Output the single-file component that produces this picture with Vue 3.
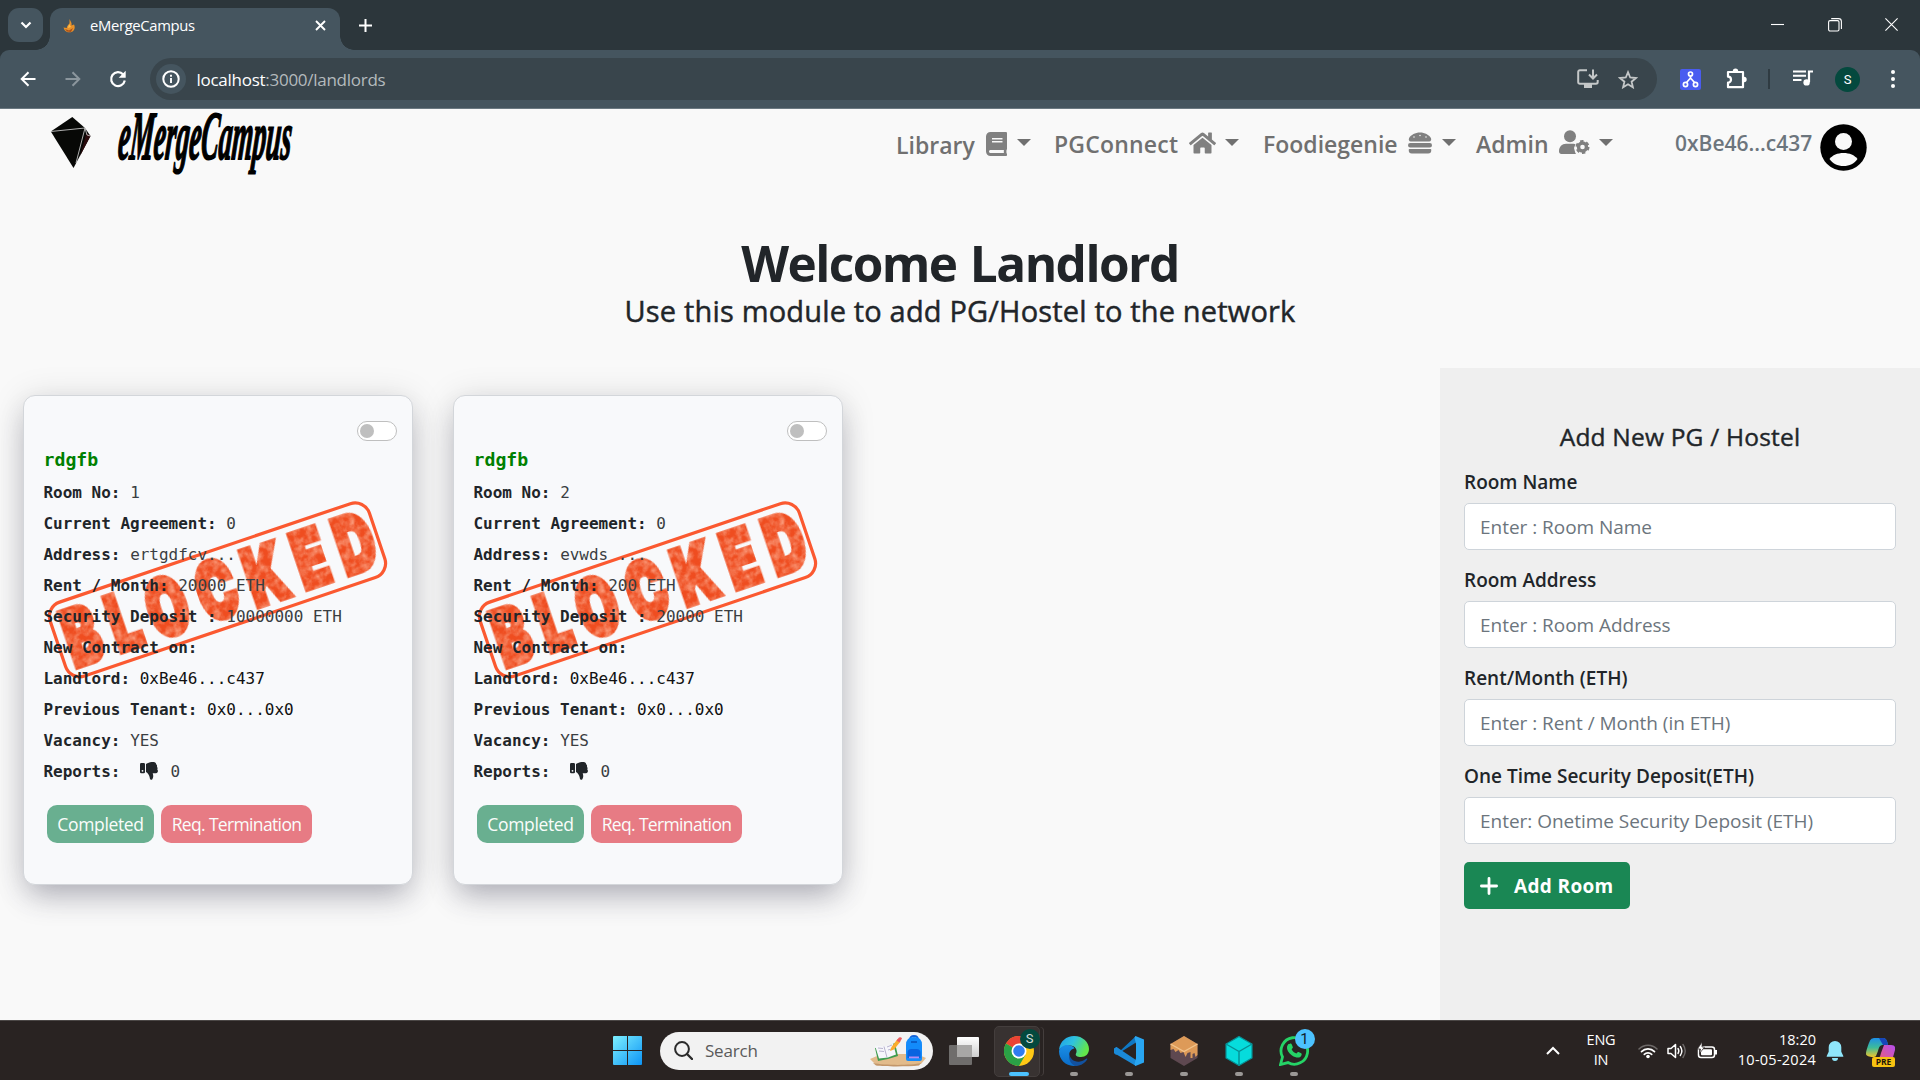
<script setup>
const navItems = [
  { label: 'Library', icon: 'book', cls: 'library' },
  { label: 'PGConnect', icon: 'house', cls: 'pg' },
  { label: 'Foodiegenie', icon: 'burger', cls: 'foodie' },
  { label: 'Admin', icon: 'admin', cls: 'admin' },
]

const rooms = [
  { no: '1', address: 'ertgdfcv...', rent: '20000 ETH', deposit: '10000000 ETH' },
  { no: '2', address: 'evwds ...', rent: '200 ETH', deposit: '20000 ETH' },
]

const rowsOf = (r) => [
  { k: 'Room No:', v: r.no },
  { k: 'Current Agreement:', v: '0' },
  { k: 'Address:', v: r.address },
  { k: 'Rent / Month:', v: r.rent },
  { k: 'Security Deposit :', v: r.deposit },
  { k: 'New Contract on:', v: '' },
  { k: 'Landlord:', v: '0xBe46...c437', dark: true },
  { k: 'Previous Tenant:', v: '0x0...0x0', dark: true },
  { k: 'Vacancy:', v: 'YES' },
]

const fields = [
  { label: 'Room Name', ph: 'Enter : Room Name' },
  { label: 'Room Address', ph: 'Enter : Room Address' },
  { label: 'Rent/Month (ETH)', ph: 'Enter : Rent / Month (in ETH)' },
  { label: 'One Time Security Deposit(ETH)', ph: 'Enter: Onetime Security Deposit (ETH)' },
]
</script>

<template>
  <div class="screen">
    <div class="tabstrip">
      <div class="tabsearch">
        <svg width="12" height="8" viewBox="0 0 12 8"><path d="M1.500 1.500 6 6l4.500-4.500" fill="none" stroke="#fff" stroke-width="2.200" /></svg>
      </div>
      <div class="tab">
        <svg class="favicon" width="14" height="16" viewBox="0 0 14 16">
          <path d="M6.500 1C8 4 9 5 8.500 7.500L11 6.500c1.500 3 .5 5.500-1.500 7-3 1.500-6 1-8-1.500L.5 9.500 4 10c-.5-2 2-3 2.500-5z" fill="#e8912a" />
          <path d="M2 11l4 1.500 4-2.500-2 4-4-.5z" fill="#a8501c" />
          <path d="M6 6l2 3-3 1z" fill="#ffc04a" />
        </svg>
        <span class="tabtitle">eMergeCampus</span>
        <svg class="tabclose" width="11" height="11" viewBox="0 0 11 11"><path d="M1 1l9 9M10 1l-9 9" stroke="#fff" stroke-width="1.900" /></svg>
      </div>
      <svg class="newtab" width="13" height="13" viewBox="0 0 13 13"><path d="M6.500 0v13M0 6.500h13" stroke="#fff" stroke-width="2" /></svg>
      <div class="wincontrols">
        <svg width="13" height="13" viewBox="0 0 13 13"><path d="M0 6.500h13" stroke="#fff" stroke-width="1.100" /></svg>
        <svg width="14" height="14" viewBox="0 0 14 14" fill="none" stroke="#fff" stroke-width="1.100"><rect x=".6" y="2.600" width="10.400" height="10.400" rx="1.500" /><path d="M3.200.6h7.300a2.900 2.900 0 0 1 2.900 2.900v7.500" /></svg>
        <svg width="13" height="13" viewBox="0 0 13 13"><path d="M.4.4l12.200 12.200M12.600.4.4 12.600" stroke="#fff" stroke-width="1.100" /></svg>
      </div>
    </div>

    <div class="toolbarwrap">
      <div class="toolbar">
        <svg class="back" width="16" height="16" viewBox="0 0 16 16" fill="none" stroke="#fff" stroke-width="2"><path d="M15.500 8H2M8.500 1.200 1.700 8l6.800 6.800" /></svg>
        <svg class="fwd" width="16" height="16" viewBox="0 0 16 16" fill="none" stroke="#8b969d" stroke-width="2"><path d="M.5 8H14M7.500 1.200 14.300 8l-6.800 6.800" /></svg>
        <svg class="reload" width="18" height="18" viewBox="0 0 18 18"><path d="M14.200 4.500A6.900 6.900 0 1 0 15.800 10.500" fill="none" stroke="#fff" stroke-width="2.200" /><path d="M16.700.8v7H9.700z" fill="#fff" /></svg>
        <div class="omnibox">
          <span class="siteinfo">
            <svg width="18" height="18" viewBox="0 0 18 18"><circle cx="9" cy="9" r="7.700" fill="none" stroke="#fff" stroke-width="2" /><path d="M9 8v5M9 4.800v2" stroke="#fff" stroke-width="1.900" /></svg>
          </span>
          <span class="url">localhost<span class="path">:3000/landlords</span></span>
          <svg class="install" width="22" height="20" viewBox="0 0 22 20"><path d="M10 1.200H3A1.700 1.700 0 0 0 1.200 3v10A1.700 1.700 0 0 0 3 14.800h16a1.700 1.700 0 0 0 1.700-1.700V11" fill="none" stroke="#c4c7c8" stroke-width="2" /><path d="M7 15h8v4H7z" fill="#c4c7c8" /><path d="M16 .5V9M12 5.500l4 4 4-4" fill="none" stroke="#c4c7c8" stroke-width="2" /></svg>
          <svg class="star" width="20" height="19" viewBox="0 0 20 19"><path d="M10 2.200l2.200 5.300 5.700.5-4.300 3.700 1.300 5.600L10 14.300l-4.900 3 1.300-5.600L2.100 8l5.700-.5z" fill="none" stroke="#c4c7c8" stroke-width="1.800" /></svg>
        </div>
        <svg class="ext" width="21" height="21" viewBox="0 0 21 21"><rect width="21" height="21" rx="2" fill="#4a5cf0" /><g fill="none" stroke="#fff" stroke-width="1.700"><circle cx="10.500" cy="5" r="2" /><circle cx="5.500" cy="15.500" r="2.100" /><circle cx="15.500" cy="15.500" r="2.100" /><path d="M10.500 7v3.500M10.500 9 6.500 13.500M10.500 9l4 4.500" /></g></svg>
        <svg class="puzzle" width="21" height="21" viewBox="0 0 21 21"><path d="M2 4h15v15.200H2v-4.500a2.900 2.900 0 0 0 0-6z" fill="none" stroke="#fff" stroke-width="2.200" stroke-linejoin="round" /><path d="M6.800 3.200a2.700 2.700 0 0 1 5.400 0zM18 8.800a2.700 2.700 0 0 1 0 5.400z" fill="#fff" /></svg>
        <span class="sep"></span>
        <svg class="queue" width="20" height="16" viewBox="0 0 20 16"><path d="M0 1.500h13M0 5.700h13M0 10h8.500" stroke="#fff" stroke-width="2" /><path d="M16 12V1.500h4" fill="none" stroke="#fff" stroke-width="2.200" /><circle cx="13.600" cy="12.400" r="3.200" fill="#fff" /></svg>
        <span class="profile">S</span>
        <svg class="kebab" width="4" height="18" viewBox="0 0 4 18" fill="#fff"><circle cx="2" cy="2" r="2" /><circle cx="2" cy="9" r="2" /><circle cx="2" cy="16" r="2" /></svg>
      </div>
    </div>

    <main class="page">
      <header class="nav">
        <svg class="gem" width="42" height="54" viewBox="0 0 42 54">
          <path d="M22.300 1 .8 15.500 23.500 52 40.500 20 35 12z" fill="#070806" />
          <path d="M30 40 36.500 17 40.500 20z" fill="#2a0a0c" />
          <path d="M.8 15.500 35 12 26 47M35 12l2 7 3.500 1" fill="none" stroke="#d8d8d8" stroke-width=".8" />
        </svg>
        <svg class="wordmark" width="180" height="66" viewBox="0 0 180 66">
          <text transform="translate(-1 44.500) skewX(-5)" font-size="69" textLength="173" lengthAdjust="spacingAndGlyphs">eMergeCampus</text>
        </svg>
        <nav class="menu">
          <a v-for="n in navItems" :key="n.label" :class="['item', n.cls]">
            <span class="label">{{ n.label }}</span>
            <svg v-if="n.icon === 'book'" class="ico" width="21" height="24" viewBox="0 0 448 512"><path fill="#808080" d="M448 360V24c0-13.300-10.700-24-24-24H96C43 0 0 43 0 96v320c0 53 43 96 96 96h328c13.300 0 24-10.700 24-24v-16c0-7.500-3.500-14.300-8.900-18.700-4.200-15.400-4.200-59.300 0-74.700 5.400-4.300 8.900-11.100 8.900-18.600zM128 134c0-3.300 2.700-6 6-6h212c3.300 0 6 2.700 6 6v20c0 3.300-2.700 6-6 6H134c-3.300 0-6-2.700-6-6v-20zm0 64c0-3.300 2.700-6 6-6h212c3.300 0 6 2.700 6 6v20c0 3.300-2.700 6-6 6H134c-3.300 0-6-2.700-6-6v-20zm253.400 250H96c-17.700 0-32-14.300-32-32 0-17.600 14.400-32 32-32h285.400c-1.900 17.100-1.900 46.900 0 64z" /></svg>
            <svg v-if="n.icon === 'house'" class="ico" width="27" height="24" viewBox="0 0 576 512"><path fill="#808080" d="M280.370 148.260L96 300.110V464a16 16 0 0 0 16 16l112.060-.29a16 16 0 0 0 15.920-16V368a16 16 0 0 1 16-16h64a16 16 0 0 1 16 16v95.640a16 16 0 0 0 16 16.050L464 480a16 16 0 0 0 16-16V300L295.670 148.260a12.190 12.190 0 0 0-15.300 0zM571.600 251.470L488 182.560V44.050a12 12 0 0 0-12-12h-56a12 12 0 0 0-12 12v72.610L318.470 43a48 48 0 0 0-61 0L4.340 251.470a12 12 0 0 0-1.600 16.900l25.500 31A12 12 0 0 0 45.150 301l235.220-193.740a12.190 12.190 0 0 1 15.300 0L530.900 301a12 12 0 0 0 16.900-1.600l25.500-31a12 12 0 0 0-1.700-16.930z" /></svg>
            <svg v-if="n.icon === 'burger'" class="ico" width="24" height="24" viewBox="0 0 512 512"><path fill="#808080" d="M464 256H48a48 48 0 0 0 0 96h416a48 48 0 0 0 0-96zm16 128H32a16 16 0 0 0-16 16v16a64 64 0 0 0 64 64h352a64 64 0 0 0 64-64v-16a16 16 0 0 0-16-16zM58.640 224h394.720c34.570 0 54.620-43.900 34.820-75.880C448 83.200 359.550 32.100 256 32c-103.540.1-192 51.200-232.180 116.110C4 180.090 24.070 224 58.640 224zM384 112a16 16 0 1 1-16 16 16 16 0 0 1 16-16zM256 80a16 16 0 1 1-16 16 16 16 0 0 1 16-16zm-128 32a16 16 0 1 1-16 16 16 16 0 0 1 16-16z" /></svg>
            <svg v-if="n.icon === 'admin'" class="ico" width="31" height="25" viewBox="0 0 31 25" fill="#808080"><circle cx="11" cy="6.200" r="6" /><path d="M0 21.500c0-5 3-7.800 7-7.800h7.500c1 0 1.500.2 2 .5l-1.500 3.800 1.200 4.500.8 1.500H2.400C1 24 0 23 0 21.500z" /><circle cx="23.500" cy="17" r="4" fill="none" stroke="#808080" stroke-width="3.400" /><circle cx="23.500" cy="17" r="6" fill="none" stroke="#808080" stroke-width="2" stroke-dasharray="3.400 2.883" /></svg>
            <span class="caret"></span>
          </a>
        </nav>
        <span class="wallet">0xBe46...c437</span>
        <svg class="avatar" width="47" height="47" viewBox="0 0 47 47"><circle cx="23.500" cy="23.500" r="23.200" /><circle cx="23.500" cy="17.500" r="8.500" fill="#f9f9f9" /><path d="M9.500 35c3-4 8-6 14-6s11 2 14 6c-3 4.500-8 7-14 7s-11-2.500-14-7z" fill="#f9f9f9" /></svg>
      </header>

      <section class="hero">
        <h1>Welcome Landlord</h1>
        <p>Use this module to add PG/Hostel to the network</p>
      </section>

      <div class="content">
        <div class="cards">
          <article v-for="r in rooms" :key="r.no" class="card">
            <svg class="stamp" width="350" height="186" viewBox="0 0 350 186">
              <defs>
                <filter :id="'grain' + r.no" x="-5%" y="-5%" width="110%" height="110%" color-interpolation-filters="sRGB">
                  <feTurbulence type="fractalNoise" baseFrequency=".14" numOctaves="4" seed="4" result="n" />
                  <feColorMatrix in="n" type="matrix" values="0 0 0 0 1  0 0 0 0 .75  0 0 0 0 .65  1.400 0 0 0 -.500" result="l" />
                  <feComposite in="l" in2="SourceAlpha" operator="in" result="g" />
                  <feMerge><feMergeNode in="SourceGraphic" /><feMergeNode in="g" /></feMerge>
                </filter>
              </defs>
              <g transform="rotate(-18.700 175 93)">
                <rect x="7" y="54" width="337" height="78" rx="15" fill="none" stroke="#fb5930" stroke-width="3.200" />
                <g :filter="`url(#grain${r.no})`">
                  <text transform="translate(15 121.500) scale(.66 1)" font-size="79" textLength="492" lengthAdjust="spacing">BLOCKED</text>
                </g>
              </g>
            </svg>
            <div class="cardbody">
              <div class="switchrow"><span class="switch"><i></i></span></div>
              <h2 class="roomname">rdgfb</h2>
              <div v-for="row in rowsOf(r)" :key="row.k" class="row">
                <b>{{ row.k }}</b>&nbsp;<span :class="{ dark: row.dark }">{{ row.v }}</span>
              </div>
              <div class="row reports">
                <b>Reports:</b>
                <svg width="18" height="18" viewBox="0 0 18 18"><path d="M0 2.200Q0 1 1.200 1h2.600Q5 1 5 2.200V10q0 1.200-1.200 1.200H1.200Q0 11.200 0 10z" fill="#212529" /><circle cx="2.500" cy="8.800" r=".9" fill="#f9fafc" /><path d="M6 2C8 1.200 9.500.2 11.500.1c3-.2 4.500.3 4.700 2.200 1 .7 1 1.700.7 2.500.8.8.8 1.800.4 2.600 1.300 1.600.4 3.800-1.300 3.800h-3.300c.3 1.300.8 2.300.4 4-.3 1.600-1 2.600-2 2.600-1.200 0-1.200-1.500-1.500-2.800C9.200 13 7.500 10.500 6 10z" fill="#212529" /></svg>
                <span>0</span>
              </div>
              <div class="actions">
                <button class="ok">Completed</button>
                <button class="term">Req. Termination</button>
              </div>
            </div>
          </article>
        </div>

        <aside class="panel">
          <h3>Add New PG / Hostel</h3>
          <div v-for="f in fields" :key="f.label" class="field">
            <label>{{ f.label }}</label>
            <div class="input">{{ f.ph }}</div>
          </div>
          <button class="add">
            <svg width="18" height="18" viewBox="0 0 18 18"><path d="M9 1.400v15.200M1.400 9h15.200" stroke="#fff" stroke-width="2.800" stroke-linecap="round" /></svg>
            <span>Add Room</span>
          </button>
        </aside>
      </div>
    </main>

    <footer class="taskbar">
      <svg class="start" width="29" height="29" viewBox="0 0 29 29">
        <defs><linearGradient id="win" x1="0" y1="0" x2="1" y2="1"><stop offset="0" stop-color="#7df0ff" /><stop offset="1" stop-color="#0d94f5" /></linearGradient></defs>
        <path d="M1 0h13v14H0V1a1 1 0 0 1 1-1zM15 0h13a1 1 0 0 1 1 1v13H15zM0 15h14v14H1a1 1 0 0 1-1-1zM15 15h14v13a1 1 0 0 1-1 1H15z" fill="url(#win)" />
      </svg>
      <div class="search">
        <svg class="lens" width="19" height="19" viewBox="0 0 19 19"><circle cx="8" cy="8" r="6.900" fill="none" stroke="#2b2b2b" stroke-width="2" /><path d="M13 13l5 5" stroke="#2b2b2b" stroke-width="2.400" stroke-linecap="round" /></svg>
        <span class="q">Search</span>
        <svg class="art" width="58" height="32" viewBox="0 0 58 32">
          <path d="M1 24c8-4 14-5 28-5s20 0 28 4l-5 6c-10 2-36 2-46 0z" fill="#e2bb8b" />
          <path d="M4 28c12 2.500 38 2.500 48 0l-2 2.500c-12 1.200-34 1.200-43 0z" fill="#c2966a" />
          <path d="M6 13l10-1 10-4 3 13-10 3-10 2z" fill="#3f9c4e" />
          <path d="M6 10.500l9 1 9-3 3 11-8 3-9 1z" fill="#f6f6fb" />
          <path d="M15 11.500l3 11M9 13l5 .5M10 16l5 .5M18 12l5-2M19 15l5-1.500" stroke="#b9b4cf" fill="none" stroke-width="1" />
          <path d="M21 16l1.500-4 6-8 3 2.500-6.500 8z" fill="#fbab2c" /><path d="M27.500 5.500 30 2.500q2-1 3 1l-2.500 4z" fill="#ea5a5f" />
          <path d="M41 5q0-4 4-4t4 4" fill="none" stroke="#1562d8" stroke-width="1.800" />
          <path d="M37 10q0-8 8-8t8 8v14q0 2-2 2H39q-2 0-2-2z" fill="#138bfb" />
          <path d="M38.500 18q0-4 4-4h5q4 0 4 4v5h-13z" fill="#0a63e0" /><path d="M40 21.500h10v1.800H40z" fill="#b28bf4" /><path d="M42 7h6" stroke="#0a4fb8" stroke-width="1.500" />
        </svg>
      </div>
      <svg class="taskview" width="31" height="28" viewBox="0 0 31 28"><defs><linearGradient id="tv" x1="0" y1="0" x2="0" y2="1"><stop offset="0" stop-color="#fff" /><stop offset="1" stop-color="#cfcfcf" /></linearGradient></defs><rect x="0" y="8" width="23" height="20" rx="1" fill="#6f6d6c" /><rect x="8" y="0" width="22" height="20" rx="1" fill="url(#tv)" /><path d="M8 8h15v12H8z" fill="#a8a7a6" /></svg>
      <div class="app chrome active">
        <svg width="30" height="30" viewBox="0 0 30 30"><circle cx="15" cy="15" r="15" fill="#ffc815" /><path d="M15 15 2 7.500A15 15 0 0 1 28 7.500H15z" fill="#ea4335" /><path d="M15 15 2 7.500A15 15 0 0 0 15 30l6.500-11.300z" fill="#2aa146" /><circle cx="15" cy="15" r="7.500" fill="#fff" /><circle cx="15" cy="15" r="5.800" fill="#2f7cf0" /></svg>
        <span class="badge s">S</span>
      </div>
      <div class="app">
        <svg width="30" height="30" viewBox="0 0 30 30"><defs><linearGradient id="e1" x1="0" y1="0" x2="1" y2=".4"><stop offset="0" stop-color="#1e9ee8" /><stop offset=".5" stop-color="#2fc2df" /><stop offset="1" stop-color="#62e64b" /></linearGradient><linearGradient id="e2" x1="0" y1="0" x2="0" y2="1"><stop offset="0" stop-color="#1a8fe6" /><stop offset="1" stop-color="#0a6cc8" /></linearGradient></defs><path d="M0 14C1 5 7.500 0 15 0c9 0 15 6.500 15 13 0 5-3.500 8-8 8-4 0-6-1.500-5-3.500 2-3.500-1-8-6-8C5.500 9.500 1.500 12 0 14z" fill="url(#e1)" /><path d="M0 15c1-4 5-6.500 9-6 3.500.3 6 2 6.500 3.500C11 13 9 18 11 22.500c1.500 4 6 6.500 9.500 6C11 33 0 26 0 15z" fill="url(#e2)" /><path d="M10.300 18c.7 5 5 8.500 10.700 7.500 3-.5 5-2 6.500-3 .8-.3 1 .3.700 1C26.500 26.500 22 30 17 29.900 11 28.500 9.300 22.500 10.300 18z" fill="#12519f" /></svg>
        <i></i>
      </div>
      <div class="app">
        <svg width="30" height="30" viewBox="0 0 30 30"><path d="M22 0 6.500 14.500 2.500 11 0 12.500v4.500l2 2L22 6.500z" fill="#0f78c4" /><path d="M0 12.800 2.500 11 22 24v6L0 17z" fill="#1b8ad8" /><path d="M21.500 0 30 3.500v23L21.500 30l-1-1.500L22 22V8l-1.500-6.500z" fill="#29a6f2" /></svg>
        <i></i>
      </div>
      <div class="app">
        <svg width="28" height="30" viewBox="0 0 28 30"><path d="M14 0 27.500 8v14L14 30 .5 22V8z" fill="#5e4850" /><path d="M14 0 27.500 8v11l-2 2-1-4-2 1v4h-2v-6l-3 1-2 4-2-5-3 1-2-3-3 2-2-3-3 1V8z" fill="#dd9a58" /><path d="M.5 8 14 15.500 27.500 8" fill="none" stroke="#f2c48c" stroke-width="1.300" /></svg>
        <i></i>
      </div>
      <div class="app">
        <svg width="28" height="30" viewBox="0 0 28 30"><path d="M14 .5 27 8v14L14 29.500 1 22V8z" fill="#06dcdc" stroke="#078f94" stroke-width="1.200" /><path d="M1 8l13 7.500L27 8M14 15.500v14" fill="none" stroke="#078f94" stroke-width="1.400" /></svg>
        <i></i>
      </div>
      <div class="app">
        <svg width="30" height="30" viewBox="0 0 30 30"><path d="M1.500 28.500l2-7.500A13.300 13.300 0 1 1 9 26.600z" fill="none" stroke="#25d366" stroke-width="2.800" /><path d="M10.500 8c1-.8 2-.3 2.400.7l.9 2.200c.2.600-.2 1.200-1.200 2.300 1.200 2.200 2.500 3.400 4.800 4.300 1-1.300 1.500-1.800 2.200-1.500l2.600 1.300c1 .6.500 2.500-1 3.600-2 1.400-5 .6-8.200-1.500-3.500-2.600-5.500-5.800-5-8.500.2-1.300 1-2.200 1.500-2.900z" fill="#25d366" /></svg>
        <span class="badge one">1</span>
        <i></i>
      </div>
      <div class="tray">
        <svg class="up" width="14" height="9" viewBox="0 0 14 9"><path d="M1 8l6-6 6 6" fill="none" stroke="#fff" stroke-width="2" /></svg>
        <div class="lang"><span>ENG</span><span>IN</span></div>
        <svg class="wifi" width="20" height="16" viewBox="0 0 20 16" fill="none" stroke-linecap="round"><path d="M1 6a12.500 12.500 0 0 1 18 0" stroke="#6d6968" stroke-width="1.500" /><path d="M3.500 8.700a9 9 0 0 1 13 0M6.300 11.300a5.300 5.300 0 0 1 7.400 0" stroke="#fff" stroke-width="1.700" /><circle cx="10" cy="13.500" r="1.800" fill="#fff" /></svg>
        <svg class="vol" width="20" height="16" viewBox="0 0 20 16" fill="none" stroke-linecap="round" stroke-linejoin="round"><path d="M1 5.500h3L8.500 1.500v13L4 10.500H1z" stroke="#fff" stroke-width="1.500" /><path d="M11 5.500q1.700 2.500 0 5M13.300 3.500q3.200 4.500 0 9" stroke="#fff" stroke-width="1.400" /><path d="M16 1.500q4.500 6.500 0 13" stroke="#6d6968" stroke-width="1.400" /></svg>
        <svg class="batt" width="21" height="17" viewBox="0 0 21 17"><rect x="1.500" y="5" width="16" height="10.500" rx="2.500" fill="none" stroke="#fff" stroke-width="1.500" /><rect x="4" y="7.300" width="11" height="6" rx="1" fill="#fff" /><path d="M19 8v4.500" stroke="#fff" stroke-width="2" /><path d="M5 0 .5 7h3l-1 4.500L7.500 5H5z" fill="#fff" stroke="#292322" stroke-width=".7" /></svg>
        <div class="clock"><span>18:20</span><span class="date">10-05-2024</span></div>
        <svg class="bell" width="18" height="20" viewBox="0 0 18 20" fill="#8fe6fb"><path d="M9 0a6.300 6.300 0 0 1 6.300 6.300v4.500L17.300 15v.8H.7V15l2-4.200V6.300A6.300 6.300 0 0 1 9 0zM6 17h6a3 3 0 0 1-6 0z" /></svg>
        <div class="copilot">
          <svg width="29" height="26" viewBox="0 0 29 26"><defs><linearGradient id="c1" x1="0" y1="0" x2="0" y2="1"><stop offset="0" stop-color="#1d8fe8" /><stop offset=".5" stop-color="#3dbb9a" /><stop offset="1" stop-color="#f0c52a" /></linearGradient><linearGradient id="c2" x1="1" y1="0" x2="0" y2="1"><stop offset="0" stop-color="#b44df0" /><stop offset="1" stop-color="#f2635f" /></linearGradient></defs><path d="M8 0h9c3 0 4 2 5 7h-5c-3 0-4 2-5 6l-2 5c-1 2-10 1-10-2C0 12 3 5 4 2.500Q5 0 8 0z" fill="url(#c1)" /><path d="M18 7h7q5 0 4 5l-2.500 9Q25 26 20 26h-8c-2 0-2-3-1-5 2 0 3-2 4-6z" fill="url(#c2)" /><path d="M13 0h4c3 0 4 2 5 7h-5z" fill="#1746b8" /></svg>
          <span class="pre">PRE</span>
        </div>
      </div>
    </footer>
  </div>
</template>

<style>
body { overflow: hidden; }
</style>

<style scoped>
.screen { width: 1920px; height: 1080px; display: flex; flex-direction: column; background: #f9f9f9; font-family: "Open Sans", "Noto Sans", sans-serif; color: #212529; overflow: hidden; white-space: nowrap; }
.screen svg { flex: none; display: block; }
h1, h2, h3, p { margin: 0; }
button { border: 0; padding: 0; font: inherit; }

/* browser chrome */
.tabstrip { height: 50px; flex: none; display: flex; background: #2c363b; }
.tabsearch { width: 35px; height: 34px; margin: 8px 0 0 8px; border-radius: 11px; background: #45555f; display: flex; align-items: center; justify-content: center; }
.tab { position: relative; width: 290px; height: 42px; margin: 8px 0 0 7px; border-radius: 12px 12px 0 0; background: #45555f; display: flex; }
.tab::before, .tab::after { content: ""; position: absolute; bottom: 0; width: 14px; height: 14px; }
.tab::before { left: -14px; background: radial-gradient(circle at 0 0, transparent 13.5px, #45555f 14px); }
.tab::after { right: -14px; background: radial-gradient(circle at 100% 0, transparent 13.5px, #45555f 14px); }
.favicon { margin: 10px 0 0 13px; }
.tabtitle { width: 104px; margin-left: 13px; font-size: 14.800px; letter-spacing: -.33px; line-height: 35px; color: #fff; }
.tabclose { margin: 12px 0 0 121px; }
.newtab { margin: 19px 0 0 19px; }
.wincontrols { margin: 18px 22px 0 auto; display: flex; gap: 43.500px; }
.toolbarwrap { flex: none; background: #2c363b; }
.toolbar { height: 58px; border-bottom: 1px solid #6a7881; border-radius: 9px 9px 0 0; background: #45555f; display: flex; align-items: center; }
.back { margin-left: 20px; }
.fwd { margin-left: 29px; }
.reload { margin-left: 28px; }
.omnibox { width: 1507px; height: 42px; margin-left: 23px; border-radius: 21px; background: #39454c; display: flex; align-items: center; }
.siteinfo { width: 30px; height: 30px; margin-left: 6px; border-radius: 50%; background: #45555f; display: flex; align-items: center; justify-content: center; }
.url { width: 189px; margin-left: 10.500px; font-size: 17px; letter-spacing: -.27px; color: #fff; }
.path { color: #b4babd; }
.install { margin-left: auto; }
.star { margin: 0 19px 0 19px; }
.ext { margin-left: 23px; }
.puzzle { margin-left: 25px; margin-top: -2px; }
.sep { width: 2px; height: 20px; margin-left: 21px; background: #2f3b42; }
.queue { margin-left: 23px; margin-top: -2px; }
.profile { width: 25px; height: 25px; margin-left: 22px; border-radius: 50%; background: #04493e; color: #fff; font: 13px/25px Roboto, sans-serif; text-align: center; }
.kebab { margin-left: 31px; }

/* page */
.page { height: 911px; flex: none; display: flex; flex-direction: column; }
.nav { height: 81px; flex: none; display: flex; }
.gem { margin: 7px 0 0 50px; }
.wordmark { margin: 5px 0 0 26px; overflow: visible; }
.wordmark text { font-family: "Liberation Serif", serif; font-weight: 700; font-style: italic; stroke: #000; stroke-width: 1.800; }
.menu { display: flex; margin-left: 598px; height: 70px; }
.item { display: flex; align-items: center; height: 70px; color: #707070; font-size: 23px; font-weight: 600; }
.item .label { padding-bottom: 1px; }
.item .caret { border: 7px solid transparent; border-top-color: #707070; border-bottom: 0; margin-left: 9px; margin-top: -3px; }
.ico { margin-left: 10px; margin-top: -3px; }
.item.library .label { width: 80px; padding: 2px 0 0; }
.item.library .ico { margin-top: -1px; }
.item.library .caret { margin-left: 10px; }
.item.pg { margin-left: 23px; }
.item.pg .label { width: 125px; letter-spacing: .2px; }
.item.foodie { margin-left: 24px; }
.item.foodie .label { width: 135px; }
.item.foodie .caret { margin-left: 10px; }
.item.admin { margin-left: 20px; }
.item.admin .label { width: 73px; }
.wallet { width: 137px; margin-left: 62px; font-size: 21px; font-weight: 600; line-height: 69px; color: #6c757d; }
.avatar { margin: 15px 0 0 8px; }
.hero { height: 178px; flex: none; text-align: center; }
.hero h1 { padding-top: 42px; font-size: 49.500px; letter-spacing: -1.550px; word-spacing: 2px; line-height: 62px; font-weight: 700; }
.hero p { font-size: 29px; line-height: 36px; margin-top: -1px; letter-spacing: .17px; -webkit-text-stroke: .45px #212529; }
.content { flex: 1; display: flex; justify-content: space-between; }
.cards { display: flex; gap: 40px; padding: 27px 0 0 23px; }
.card { position: relative; width: 390px; height: 490px; box-sizing: border-box; border: 1px solid #d3d6da; border-radius: 12px; background: #f8f9fb; box-shadow: 0 16px 30px -6px rgba(50,50,80,.3), 0 3px 34px rgba(0,0,0,.13); }
.stamp { position: absolute; left: 18px; top: 101px; overflow: visible; }
.stamp text { font-family: Inter, sans-serif; font-weight: 900; fill: #ef4d20; stroke: #ef4d20; stroke-width: 5.500; }
.cardbody { position: relative; padding: 25px 15px 0 19.500px; font-family: "DejaVu Sans Mono", monospace; font-size: 15.990px; }
.switchrow { display: flex; justify-content: flex-end; }
.switch { width: 38px; height: 18px; border: 1px solid #bfbfbf; border-radius: 10px; background: #fff; display: flex; align-items: center; }
.switch i { width: 14px; height: 14px; margin-left: 2px; border-radius: 50%; background: #bfbfbf; }
.roomname { margin-top: 3px; font-size: 18.200px; line-height: 32px; font-weight: 700; color: #008000; }
.row { height: 31px; line-height: 31px; }
.row span { color: #3a3e42; }
.row span.dark { color: #111; }
.row:nth-of-type(2) { margin-top: 1px; }
.reports { display: flex; align-items: center; }
.reports svg { margin-left: 19px; margin-top: -2px; }
.reports span { margin-left: 13px; }
.actions { display: flex; gap: 7px; margin: 18px 0 0 3.500px; font-family: "Open Sans", sans-serif; font-size: 17.500px; }
.actions button { height: 38px; border-radius: 10px; color: #fafdfb; text-align: center; line-height: 38px; }
.ok { width: 107px; background: #69af90; letter-spacing: -.35px; }
.term { width: 151px; background: #e77b84; letter-spacing: -.65px; }
.panel { width: 480px; box-sizing: border-box; padding: 48px 24px 0; background: #efefef; }
.panel h3 { text-align: center; font-size: 24.500px; line-height: 42px; height: 40px; font-weight: 400; letter-spacing: .2px; -webkit-text-stroke: .4px #212529; }
.field { height: 98px; }
.field label { display: block; height: 47px; font-size: 19px; line-height: 52px; font-weight: 600; }
.input { height: 47px; box-sizing: border-box; border: 1px solid #ced4da; border-radius: 5px; background: #fff; padding-left: 15px; font-size: 19px; line-height: 47px; color: #6c757d; letter-spacing: -.03px; }
.add { width: 166px; height: 47px; margin-top: 14px; border-radius: 5px; background: #1a8754; color: #fff; font-size: 19px; font-weight: 700; letter-spacing: .35px; display: flex; align-items: center; }
.add svg { margin: 0 16px; }

/* taskbar */
.taskbar { height: 60px; flex: none; box-sizing: border-box; border-top: 1px solid #4b4746; background: #292322; display: flex; align-items: center; color: #fff; }
.start { margin-left: 613px; }
.search { width: 273px; height: 38px; margin-left: 18px; border-radius: 19px; background: #f2f2f2; display: flex; align-items: center; }
.lens { margin-left: 14px; }
.q { width: 52px; margin-left: 12px; font-size: 17px; letter-spacing: -.2px; color: #5a5a5a; }
.art { margin-left: auto; margin-right: 6px; }
.taskview { margin: 0 11.500px 0 16px; }
.app { position: relative; width: 55px; height: 50px; display: flex; align-items: center; justify-content: center; }
.app i { position: absolute; left: 23px; bottom: 0; width: 8px; height: 4px; border-radius: 2px; background: #9b9896; }
.app.active::before { content: ""; position: absolute; z-index: 0; left: 2px; top: 0; width: 44px; height: 49px; border-radius: 5px; background: #383231; border: 1px solid #443e3d; box-shadow: 4px 0 0 -1px #292322, 5px 0 0 -1px #443e3d; }
.app.active::after { content: ""; position: absolute; left: 17px; bottom: 0; width: 20px; height: 4px; border-radius: 2px; background: #4cc2ff; }
.app svg { position: relative; }
.badge { position: absolute; width: 20px; height: 20px; border-radius: 50%; text-align: center; font: 13px/20px Roboto, sans-serif; }
.badge.s { left: 28px; top: 3px; background: #04493e; color: #d6dedc; }
.badge.one { left: 28px; top: 3px; background: #4cc2ff; color: #10202c; font-size: 15px; }
.tray { margin-left: auto; display: flex; align-items: center; margin-right: 25px; }
.lang { width: 30px; margin-left: 26px; text-align: center; display: flex; flex-direction: column; font-size: 14.500px; letter-spacing: -.2px; line-height: 20px; margin-top: -1px; }
.wifi { margin-left: 22px; }
.vol { margin-left: 9px; }
.batt { margin-left: 10px; }
.clock { width: 80px; margin-left: 18px; display: flex; flex-direction: column; align-items: flex-end; font-size: 14.500px; line-height: 20px; margin-top: -2px; }
.date { letter-spacing: .25px; }
.bell { margin-left: 10px; }
.copilot { position: relative; margin-left: 22px; }
.pre { position: absolute; right: 0; bottom: -3px; width: 23px; height: 10px; border-radius: 2px; background: #f7c211; color: #1c1508; font: 700 8.500px/10px "Open Sans", sans-serif; text-align: center; }
</style>
